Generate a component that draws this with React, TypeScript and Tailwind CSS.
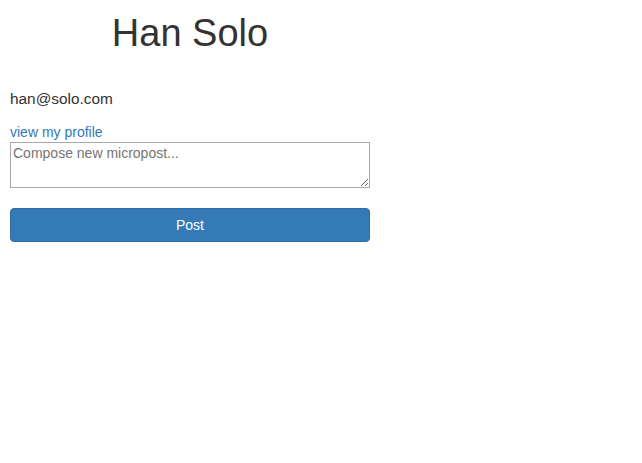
export default function App() {
  return (
    <div className="min-h-screen bg-white font-['Liberation_Sans',Arial,sans-serif] text-[14px] text-[#333]">
      <div className="w-[370px] pl-[10px]">
        <h1 className="pt-[12px] text-center text-[38px] leading-[42px] font-normal">Han Solo</h1>
        <p className="mt-[35px] text-[15.4px] leading-5">han@solo.com</p>
        <a href="#" className="mt-[13px] block leading-5 text-[#337ab7]">
          view my profile
        </a>
        <textarea
          className="block h-[46px] w-full border border-[#a9a9a9] px-[2px] py-[1px] text-[14px] leading-[18px] placeholder:text-[#757575]"
          placeholder="Compose new micropost..."
        />
        <button className="mt-[20px] block h-[34px] w-full rounded border border-[#2e6da4] bg-[#337ab7] text-[14px] text-white">
          Post
        </button>
      </div>
    </div>
  );
}
